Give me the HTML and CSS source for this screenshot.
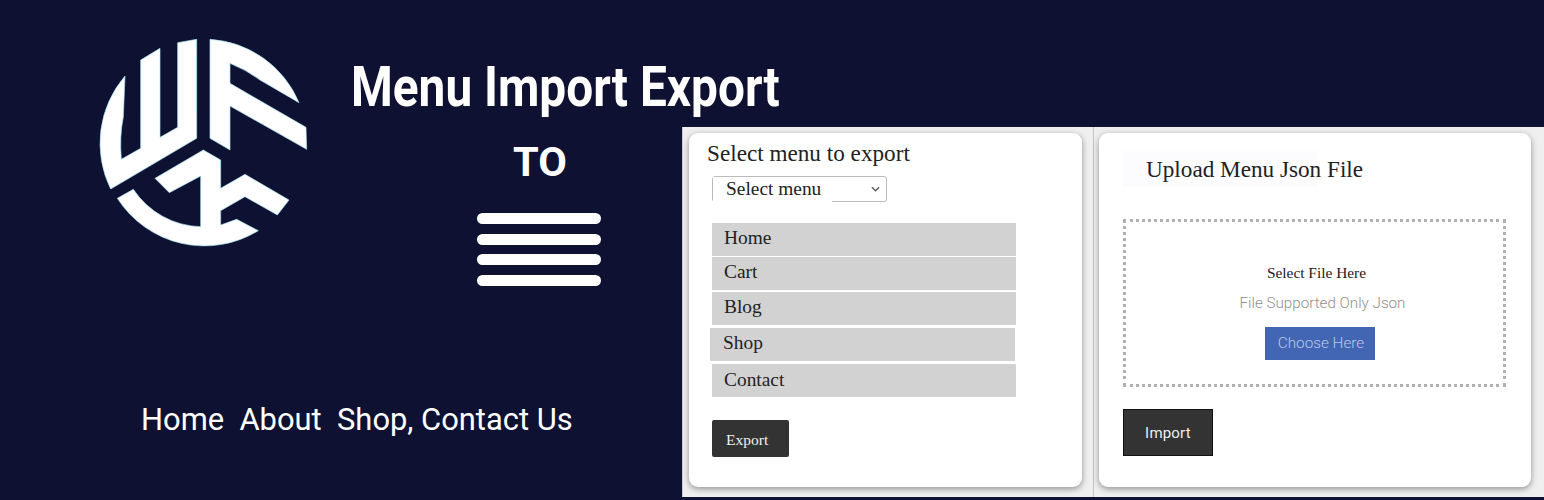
FILE: index.html
```html
<!DOCTYPE html>
<html lang="en">
<head>
<meta charset="utf-8">
<title>Menu Import Export</title>
<link rel="stylesheet" href="styles.css">
</head>
<body>
<main class="banner">
  <section class="hero">
    <div class="hero-top">
      <svg class="logo" viewBox="0 0 750 720" aria-label="WK logo">
        <path class="logo-shape" d="M92 507A310 310 0 0 1 135 168L130 290Q118 350 124 418L182 385V120L240 85V352L293 322V68L350 58V355Z"/>
        <path class="logo-shape" d="M390 58A310 310 0 0 1 657 248L540 180Q500 150 450 130V190L678 322L680 388L450 258V390L390 355Z"/>
        <path class="logo-shape" d="M112 535L160 508A250 250 0 0 0 362 620V468L268 518L225 475L370 390L422 420V505L495 463L627 540L592 585L495 530L422 572V615L470 598L535 632A310 310 0 0 1 112 535Z"/>
      </svg>
      <div class="hero-text">
        <h1 class="title">Menu Import Export</h1>
        <div class="to">TO</div>
        <div class="bars"><span class="bar"></span><span class="bar"></span><span class="bar"></span><span class="bar"></span></div>
      </div>
    </div>
    <p class="nav-line">Home&nbsp; About&nbsp; Shop, Contact Us</p>
  </section>
  <section class="panels">
    <div class="panel panel-export">
      <div class="card card-export">
        <h2 class="export-heading">Select menu to export</h2>
        <div class="select">
          <span class="select-label">Select menu</span>
          <svg class="chevron" viewBox="0 0 10 6"><path d="M1 1l4 4 4-4"/></svg>
        </div>
        <ul class="menu-list">
          <li class="menu-item menu-item-home">Home</li>
          <li class="menu-item menu-item-cart">Cart</li>
          <li class="menu-item menu-item-blog">Blog</li>
          <li class="menu-item menu-item-shop">Shop</li>
          <li class="menu-item menu-item-contact">Contact</li>
        </ul>
        <button class="btn-export" type="button">Export</button>
      </div>
    </div>
    <div class="panel panel-import">
      <div class="card card-import">
        <h2 class="import-heading">Upload Menu Json File</h2>
        <div class="dropzone">
          <div class="drop-title">Select File Here</div>
          <div class="drop-note">File Supported Only Json</div>
          <button class="btn-choose" type="button">Choose Here</button>
        </div>
        <button class="btn-import" type="button">Import</button>
      </div>
    </div>
  </section>
</main>
</body>
</html>
```
FILE: styles.css
```css
* { box-sizing: border-box; }
html, body { margin: 0; padding: 0; }
body { width: 1544px; height: 500px; overflow: hidden; background: #0f1133; }
.banner { display: flex; width: 1544px; height: 500px; background: #0f1133; }

.hero { width: 682px; flex: none; padding: 20px 0 0 80px; color: #fff; font-family: Roboto, "Liberation Sans", sans-serif; }
.hero-top { display: flex; height: 382px; }
.logo { width: 250px; height: 240px; flex: none; display: block; }
.logo-shape { fill: #fff; stroke: #a8e6f2; stroke-width: 2; stroke-linejoin: round; }
.hero-text { margin-left: 21px; width: 331px; }
.title { margin: 34px 0 0; font-size: 56px; line-height: 66px; font-weight: 700; white-space: nowrap; transform: scaleX(.853); transform-origin: left center; }
.to { margin: 18px 0 0 162px; font-size: 41.5px; line-height: 48px; font-weight: 700; }
.bars { display: flex; flex-direction: column; gap: 9.67px; margin: 27px 0 0 126px; width: 124px; }
.bar { display: block; height: 11px; border-radius: 6px; background: #fff; }
.nav-line { margin: 0 0 0 61px; font-size: 30.9px; line-height: 36px; white-space: nowrap; }

.panels { display: flex; flex: 1; height: 370px; margin-top: 127px; background: #efeff0; border-left: 1px solid #c9c9d2; }
.panel { display: flex; padding: 6px 0 10px; }
.panel-export { width: 411px; padding-left: 6px; border-right: 1px solid #c4c4c8; }
.panel-import { flex: 1; padding-left: 5px; }
.card { background: #fff; border-radius: 9px; box-shadow: 0 2px 6px rgba(0,0,0,.4); font-family: "Liberation Serif", serif; color: #222; }
.card-export { width: 393px; padding: 6px 0 0 18px; }
.card-import { width: 432px; padding: 18px 0 0 24px; }

.export-heading { margin: 0; font-size: 23.2px; line-height: 28px; font-weight: 400; }
.select { display: flex; align-items: center; justify-content: space-between; width: 175px; height: 26px; margin: 9px 0 0 5px; padding-right: 6px; border: 1px solid #bbb; border-radius: 3px; }
.select-label { align-self: stretch; width: 119px; margin-bottom: -1px; padding-left: 13px; background: #fff; font-size: 19.4px; line-height: 24px; }
.chevron { width: 9px; height: 6px; fill: none; stroke: #555; stroke-width: 1.4; }
.menu-list { list-style: none; margin: 21px 0 0 5px; padding: 0; width: 304px; font-size: 19.4px; }
.menu-item { height: 33px; padding-left: 12px; background: #d2d2d2; line-height: 30px; }
.menu-item-home { margin-bottom: 1px; }
.menu-item-cart { margin-bottom: 2px; }
.menu-item-blog { margin-bottom: 3px; }
.menu-item-shop { margin: 0 1px 3px -2px; padding-left: 13px; }
.menu-item-contact { line-height: 32px; }
.btn-export { display: block; width: 77px; height: 37px; margin: 23px 0 0 5px; padding: 2px 0 0 14px; border: 0; border-radius: 2px; background: #333; color: #f2f2f2; font: 15.5px "Liberation Serif", serif; text-align: left; }

.import-heading { width: 196px; height: 36px; margin: 0 0 0 -1px; padding-left: 24px; background: #fcfcfe; font-size: 23.2px; line-height: 36px; font-weight: 400; white-space: nowrap; }
.dropzone { display: flex; flex-direction: column; align-items: center; width: 383px; height: 168px; margin: 32px 0 0; border: 3px dotted #b0b0b0; }
.drop-title { margin: 41px 0 0 4px; font-size: 15.4px; line-height: 20px; color: #222; }
.drop-note { margin: 9px 0 0 16px; font: 300 15.2px/22px Roboto, sans-serif; color: #8f8f8f; }
.btn-choose { width: 110px; height: 33px; margin: 13px 0 0 11px; padding: 0 0 2px 2px; border: 0; background: #4266b4; color: #b9c8e8; font: 300 15.3px Roboto, sans-serif; }
.btn-import { display: block; width: 90px; height: 47px; margin-top: 22px; padding: 0; border: 1px solid #111; background: #333; color: #eee; font: 400 15px Roboto, sans-serif; letter-spacing: .2px; }
```
